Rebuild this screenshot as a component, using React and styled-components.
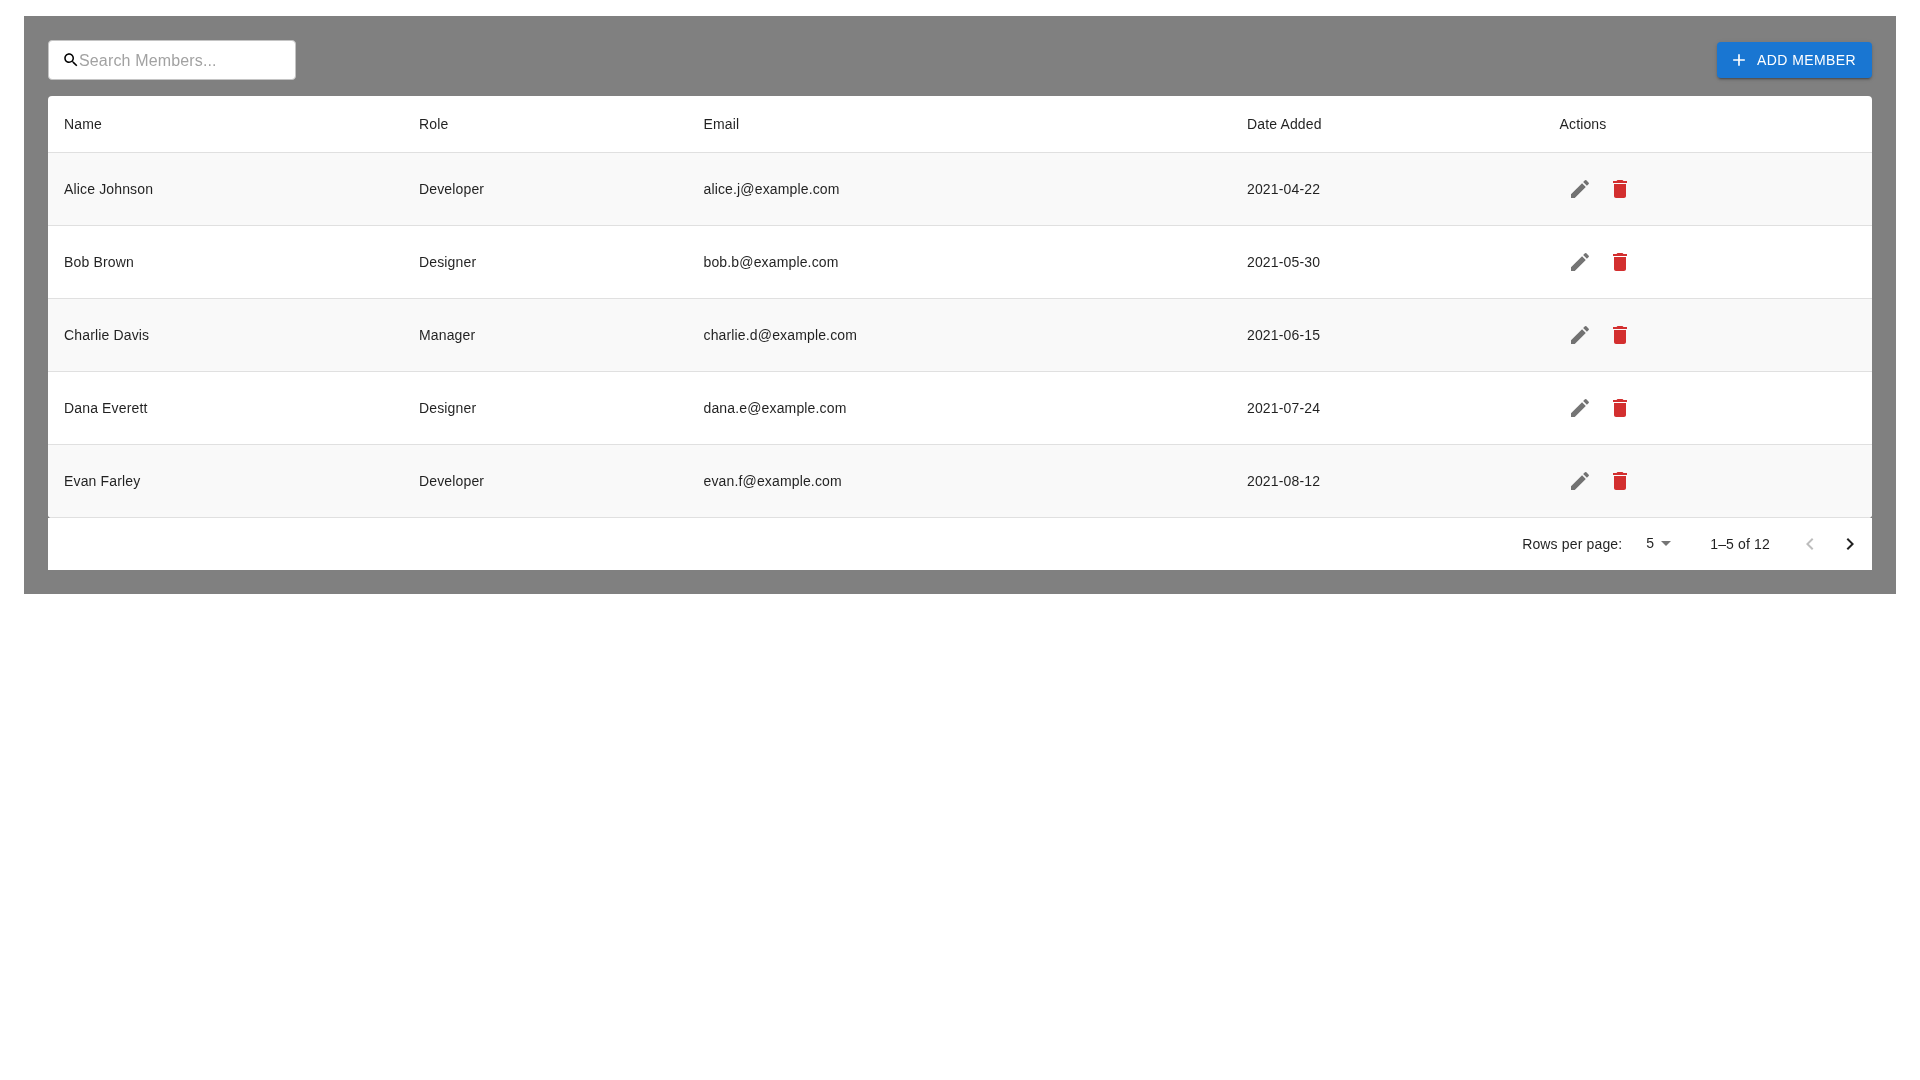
import styled, { createGlobalStyle } from 'styled-components';

const fontStack = 'Helvetica, Arial, "Liberation Sans", sans-serif';

const GlobalStyle = createGlobalStyle`
  body {
    margin: 0;
    background: #fff;
    font-family: ${fontStack};
  }
`;

const Panel = styled.div`
  margin: 16px 24px 0;
  padding: 24px;
  background: #808080;
  will-change: transform;
`;

const Toolbar = styled.div`
  display: flex;
  align-items: center;
  justify-content: space-between;
  margin-bottom: 16px;
`;

const SearchBox = styled.label`
  display: flex;
  align-items: center;
  box-sizing: border-box;
  width: 248px;
  height: 40px;
  padding-left: 13px;
  background: #fff;
  border: 1px solid #c4c4c4;
  border-radius: 4px;
`;

const SearchInput = styled.input`
  flex: 1;
  min-width: 0;
  margin-left: -1px;
  padding: 1px 0 0;
  border: 0;
  outline: 0;
  background: transparent;
  font: 16px ${fontStack};
  letter-spacing: 0.00938em;
  color: rgba(0, 0, 0, 0.87);

  &::placeholder {
    color: #a2a2a2;
    opacity: 1;
  }
`;

const Icon = styled.svg`
  display: block;
  flex: none;
  width: ${(p) => p.$size || 24}px;
  height: ${(p) => p.$size || 24}px;
  fill: ${(p) => p.$color || 'currentColor'};
`;

const AddButton = styled.button`
  display: inline-flex;
  align-items: center;
  gap: 8px;
  height: 36px;
  padding: 0 16px 0 12px;
  border: 0;
  border-radius: 4px;
  background: #1976d2;
  color: #fff;
  font: 14px/1.75 ${fontStack};
  letter-spacing: 0.02857em;
  text-transform: uppercase;
  box-shadow: 0 3px 1px -2px rgba(0, 0, 0, 0.2), 0 2px 2px 0 rgba(0, 0, 0, 0.14), 0 1px 5px 0 rgba(0, 0, 0, 0.12);
`;

const TableCard = styled.div`
  background: #fff;
  border-radius: 4px;
  overflow: hidden;
`;

const Table = styled.table`
  width: 100%;
  table-layout: fixed;
  border-collapse: collapse;
  color: rgba(0, 0, 0, 0.87);
  font-size: 14px;
  line-height: 20px;
  letter-spacing: 0.01071em;
`;

const HeadCell = styled.th`
  width: ${(p) => p.$width}px;
  height: 56px;
  padding: 0 16px;
  box-sizing: border-box;
  border-bottom: 1px solid #e0e0e0;
  font-weight: 400;
  text-align: left;
`;

const Row = styled.tr`
  background: ${(p) => (p.$striped ? '#f9f9f9' : '#fff')};
`;

const Cell = styled.td`
  padding: 16px;
  border-bottom: 1px solid #e0e0e0;
`;

const Actions = styled.div`
  display: flex;
`;

const IconButton = styled.button`
  display: flex;
  padding: 8px;
  border: 0;
  background: transparent;
  color: ${(p) => p.$color};
`;

const Footer = styled.div`
  display: flex;
  align-items: center;
  justify-content: flex-end;
  height: 52px;
  padding-right: 2px;
  background: #fff;
  color: rgba(0, 0, 0, 0.87);
  font-size: 14px;
  letter-spacing: 0.01071em;
`;

const PageSelect = styled.div`
  display: flex;
  align-items: center;
  margin: -1px 32px 0 16px;
  padding-left: 8px;
`;

const SelectArrow = styled.span`
  display: flex;
  color: rgba(0, 0, 0, 0.54);
`;

const PageButtons = styled.div`
  display: flex;
  margin-left: 20px;
`;

const members = [
  { name: 'Alice Johnson', role: 'Developer', email: 'alice.j@example.com', added: '2021-04-22' },
  { name: 'Bob Brown', role: 'Designer', email: 'bob.b@example.com', added: '2021-05-30' },
  { name: 'Charlie Davis', role: 'Manager', email: 'charlie.d@example.com', added: '2021-06-15' },
  { name: 'Dana Everett', role: 'Designer', email: 'dana.e@example.com', added: '2021-07-24' },
  { name: 'Evan Farley', role: 'Developer', email: 'evan.f@example.com', added: '2021-08-12' },
];

const columns = [
  { label: 'Name', width: 355 },
  { label: 'Role', width: 284.5 },
  { label: 'Email', width: 543.5 },
  { label: 'Date Added', width: 312.5 },
  { label: 'Actions', width: 328.5 },
];

const paths = {
  search: 'M15.5 14h-.79l-.28-.27C15.41 12.59 16 11.11 16 9.5 16 5.91 13.09 3 9.5 3S3 5.91 3 9.5 5.91 16 9.5 16c1.61 0 3.09-.59 4.23-1.57l.27.28v.79l5 4.99L20.49 19l-4.99-5zm-6 0C7.01 14 5 11.99 5 9.5S7.01 5 9.5 5 14 7.01 14 9.5 11.99 14 9.5 14z',
  add: 'M19 13h-6v6h-2v-6H5v-2h6V5h2v6h6v2z',
  edit: 'M3 17.25V21h3.75L17.81 9.94l-3.75-3.75L3 17.25zM20.71 7.04c.39-.39.39-1.02 0-1.41l-2.34-2.34a.9959.9959 0 0 0-1.41 0l-1.83 1.83 3.75 3.75 1.83-1.83z',
  trash: 'M6 19c0 1.1.9 2 2 2h8c1.1 0 2-.9 2-2V7H6v12zM19 4h-3.5l-1-1h-5l-1 1H5v2h14V4z',
  left: 'M15.41 7.41 14 6l-6 6 6 6 1.41-1.41L10.83 12z',
  right: 'M10 6 8.59 7.41 13.17 12l-4.58 4.59L10 18l6-6z',
  drop: 'm7 10 5 5 5-5z',
};

const Glyph = ({ name, size, color }) => (
  <Icon viewBox='0 0 24 24' $size={size} $color={color}>
    <path d={paths[name]} />
  </Icon>
);

const App = () => (
  <>
    <GlobalStyle />
    <Panel>
      <Toolbar>
        <SearchBox>
          <Glyph name='search' size={18} color='#000' />
          <SearchInput placeholder='Search Members...' />
        </SearchBox>
        <AddButton>
          <Glyph name='add' size={20} />
          Add Member
        </AddButton>
      </Toolbar>
      <TableCard>
        <Table>
          <thead>
            <tr>
              {columns.map((col) => (
                <HeadCell key={col.label} $width={col.width}>{col.label}</HeadCell>
              ))}
            </tr>
          </thead>
          <tbody>
            {members.map((m, i) => (
              <Row key={m.email} $striped={i % 2 === 0}>
                <Cell>{m.name}</Cell>
                <Cell>{m.role}</Cell>
                <Cell>{m.email}</Cell>
                <Cell>{m.added}</Cell>
                <Cell>
                  <Actions>
                    <IconButton $color='rgba(0, 0, 0, 0.54)'><Glyph name='edit' /></IconButton>
                    <IconButton $color='#d32f2f'><Glyph name='trash' /></IconButton>
                  </Actions>
                </Cell>
              </Row>
            ))}
          </tbody>
        </Table>
      </TableCard>
      <Footer>
        <span>Rows per page:</span>
        <PageSelect>
          5
          <SelectArrow><Glyph name='drop' /></SelectArrow>
        </PageSelect>
        <span>1–5 of 12</span>
        <PageButtons>
          <IconButton $color='rgba(0, 0, 0, 0.26)'><Glyph name='left' /></IconButton>
          <IconButton $color='rgba(0, 0, 0, 0.87)'><Glyph name='right' /></IconButton>
        </PageButtons>
      </Footer>
    </Panel>
  </>
);

export default App;
